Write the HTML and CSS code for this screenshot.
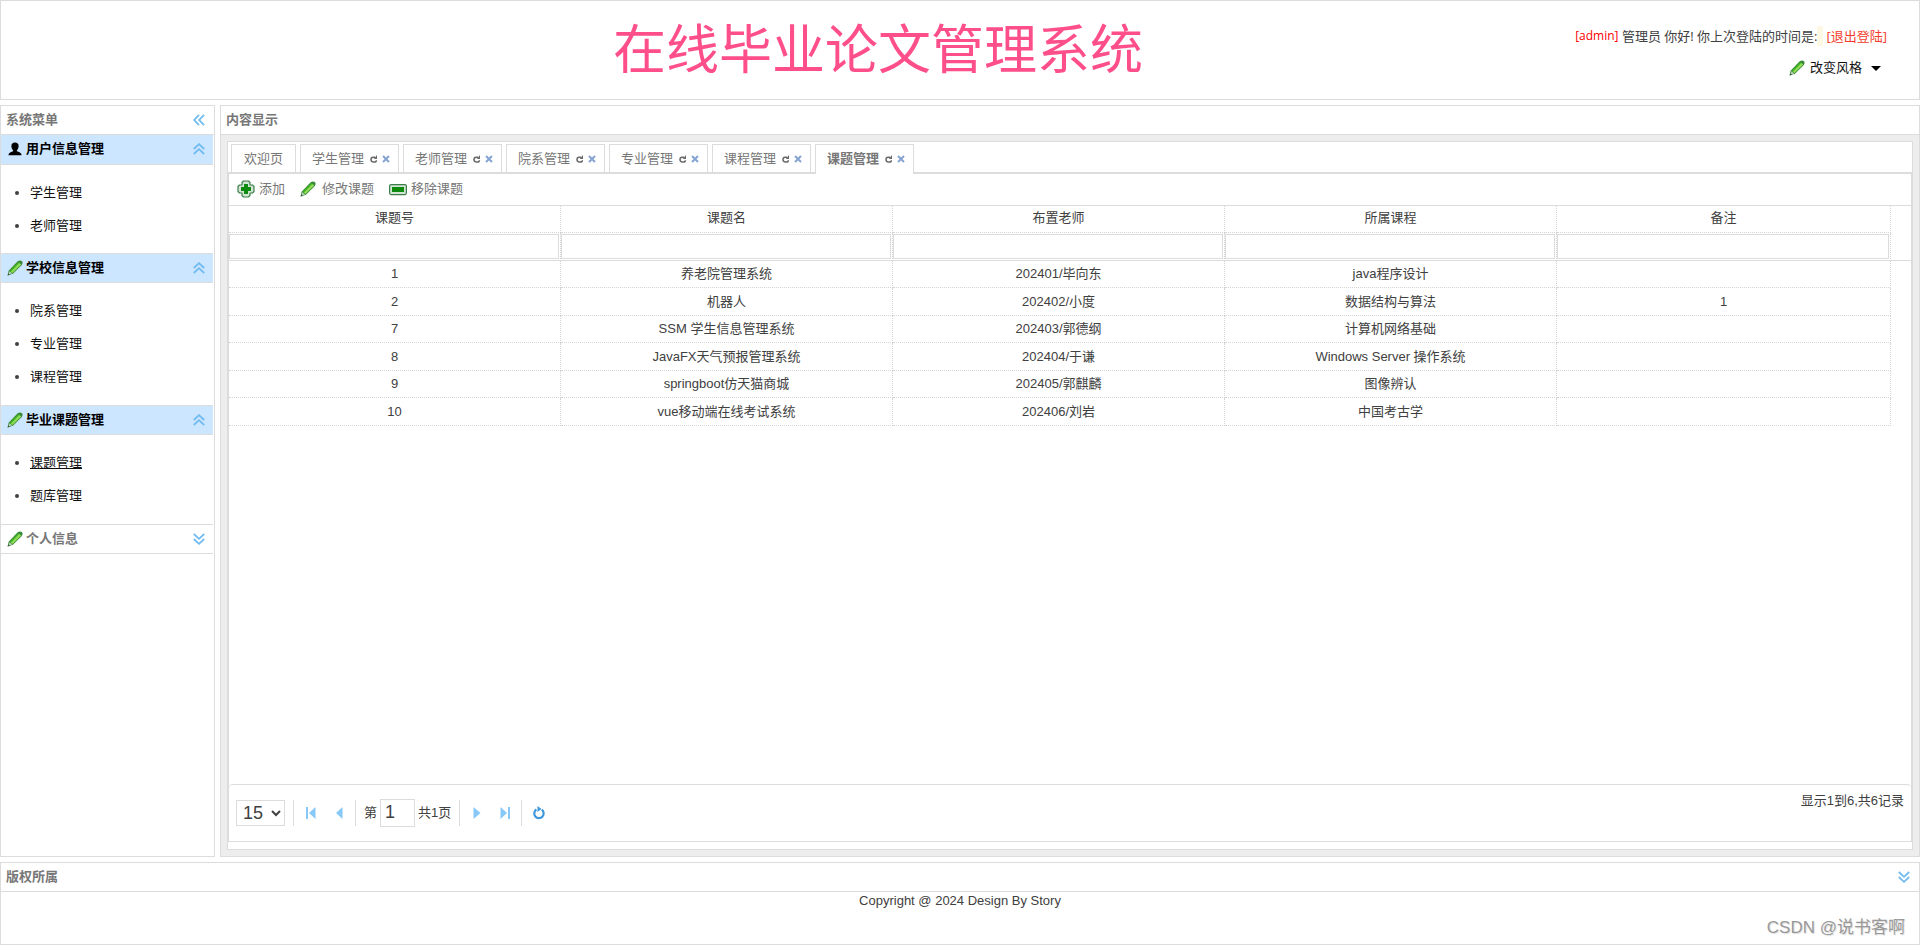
FILE: index.html
```html
<!DOCTYPE html>
<html lang="zh-CN">
<head>
<meta charset="utf-8">
<title>在线毕业论文管理系统</title>
<link rel="stylesheet" href="styles.css">
</head>
<body>
<svg class="defs" aria-hidden="true">
  <symbol id="pencil" viewBox="0 0 16 16">
    <path d="M.6 15.6 1.600 10.800 10.400 1.600Q12.600 -.2 14.800 1 16.300 2.600 14.800 5L6 13.800Z" fill="#3b8a3c"/>
    <path d="M2.600 10.600 11 2 12.800 3.200 4.200 12.200Z" fill="#3fae26"/>
    <path d="M3.800 11.700 12.200 3 14.200 4.400 5.600 13.100Z" fill="#8fdc55"/>
    <path d="M1.300 14.800 2.300 11.200 5.300 13.500Z" fill="#b9cdb9"/>
    <path d="M.6 15.600 1.200 13.200 3 14.800Z" fill="#345c38"/>
  </symbol>
  <symbol id="user" viewBox="0 0 14 14">
    <path d="M7 .6C9.200 .6 10.700 2 10.600 4.200 10.500 6.300 9.600 7.600 8.900 8.300V9.300C10.700 9.900 13.400 10.800 13.600 13.200H.4C.6 10.800 3.300 9.900 5.100 9.300V8.300C4.400 7.600 3.500 6.300 3.400 4.200 3.300 2 4.800 .6 7 .6Z" fill="#000"/>
  </symbol>
  <symbol id="up2" viewBox="0 0 12 12"><path d="M.8 6 6 1.200 11.200 6M.8 11 6 6.200 11.200 11" fill="none" stroke="#72bbf0" stroke-width="1.800"/></symbol>
  <symbol id="down2" viewBox="0 0 12 12"><path d="M.8 1 6 5.800 11.200 1M.8 6 6 10.800 11.200 6" fill="none" stroke="#72bbf0" stroke-width="1.800"/></symbol>
  <symbol id="left2" viewBox="0 0 12 12"><path d="M6 .8 1.200 6 6 11.200M11 .8 6.200 6 11 11.200" fill="none" stroke="#72bbf0" stroke-width="1.800"/></symbol>
  <symbol id="reload" viewBox="0 0 8 8"><path d="M5 2.200H3Q1 2.200 1 4.600 1 7 3.400 7H4.400Q6.400 7 6.400 5.200" fill="none" stroke="#6a6a6a" stroke-width="1.500"/><path d="M7 0V4H3.800Z" fill="#6a6a6a"/></symbol>
  <symbol id="close" viewBox="0 0 8 8"><path d="M1 1 7 7M7 1 1 7" stroke="#86a3d2" stroke-width="2"/></symbol>
</svg>

<div class="page">
  <header class="top">
    <h1 class="site-title">在线毕业论文管理系统</h1>
    <div class="account">
      <div class="greeting"><span class="name">[admin]</span> 管理员 你好! 你上次登陆的时间是:<span class="last-time"></span><a class="logout" href="#">[退出登陆]</a></div>
      <button class="theme" type="button"><svg class="ico16"><use href="#pencil"/></svg><span>改变风格</span><span class="caret"></span></button>
    </div>
  </header>

  <div class="middle">
    <aside class="side">
      <div class="panel-head"><span>系统菜单</span><button type="button" aria-label="折叠"><svg class="ico12"><use href="#left2"/></svg></button></div>
      <nav class="accordion">
        <button class="acc-head open" type="button"><svg class="ico14"><use href="#user"/></svg><span>用户信息管理</span><svg class="ico12 arrow"><use href="#up2"/></svg></button>
        <ul class="acc-list"><li><a href="#">学生管理</a></li><li><a href="#">老师管理</a></li></ul>
        <button class="acc-head open" type="button"><svg class="ico16"><use href="#pencil"/></svg><span>学校信息管理</span><svg class="ico12 arrow"><use href="#up2"/></svg></button>
        <ul class="acc-list"><li><a href="#">院系管理</a></li><li><a href="#">专业管理</a></li><li><a href="#">课程管理</a></li></ul>
        <button class="acc-head open" type="button"><svg class="ico16"><use href="#pencil"/></svg><span>毕业课题管理</span><svg class="ico12 arrow"><use href="#up2"/></svg></button>
        <ul class="acc-list"><li><a class="current" href="#">课题管理</a></li><li><a href="#">题库管理</a></li></ul>
        <button class="acc-head" type="button"><svg class="ico16"><use href="#pencil"/></svg><span>个人信息</span><svg class="ico12 arrow"><use href="#down2"/></svg></button>
      </nav>
    </aside>

    <main class="content">
      <div class="panel-head"><span>内容显示</span></div>
      <div class="content-body">
        <div class="tab-panel">
          <div class="tabs">
            <button class="tab" type="button">欢迎页</button>
            <button class="tab closable" type="button"><span>学生管理</span><svg class="ico8"><use href="#reload"/></svg><svg class="ico8"><use href="#close"/></svg></button>
            <button class="tab closable" type="button"><span>老师管理</span><svg class="ico8"><use href="#reload"/></svg><svg class="ico8"><use href="#close"/></svg></button>
            <button class="tab closable" type="button"><span>院系管理</span><svg class="ico8"><use href="#reload"/></svg><svg class="ico8"><use href="#close"/></svg></button>
            <button class="tab closable" type="button"><span>专业管理</span><svg class="ico8"><use href="#reload"/></svg><svg class="ico8"><use href="#close"/></svg></button>
            <button class="tab closable" type="button"><span>课程管理</span><svg class="ico8"><use href="#reload"/></svg><svg class="ico8"><use href="#close"/></svg></button>
            <button class="tab closable active" type="button"><span>课题管理</span><svg class="ico8"><use href="#reload"/></svg><svg class="ico8"><use href="#close"/></svg></button>
          </div>
          <section class="grid">
            <div class="toolbar">
              <button type="button"><svg class="ico18" viewBox="0 0 18 18"><path d="M6.500 1H11.500L13 2.500V5H15.500L17 6.500V11.500L15.500 13H13V15.500L11.500 17H6.500L5 15.500V13H2.500L1 11.500V6.500L2.500 5H5V2.500Z" fill="#d3e6d5" stroke="#3d7d4a" stroke-width="1.200" stroke-linejoin="round"/><path d="M7 4H11V7H14V11H11V14H7V11H4V7H7Z" fill="#0e8a0e"/></svg><span>添加</span></button>
              <button type="button"><svg class="ico16"><use href="#pencil"/></svg><span class="wide">修改课题</span></button>
              <button type="button"><svg class="ico18" viewBox="0 0 18 18"><rect x=".6" y="4.600" width="16.800" height="10" rx="1.500" fill="#d3e6d5" stroke="#3d7d4a" stroke-width="1.200"/><rect x="3" y="7" width="12" height="5" fill="#0e8a0e"/></svg><span>移除课题</span></button>
            </div>
            <div class="table-wrap">
              <table class="data">
                <thead>
                  <tr><th>课题号</th><th>课题名</th><th>布置老师</th><th>所属课程</th><th>备注</th></tr>
                  <tr class="filter"><td><input type="text" aria-label="课题号"></td><td><input type="text" aria-label="课题名"></td><td><input type="text" aria-label="布置老师"></td><td><input type="text" aria-label="所属课程"></td><td><input type="text" aria-label="备注"></td></tr>
                </thead>
                <tbody>
                  <tr><td>1</td><td>养老院管理系统</td><td>202401/毕向东</td><td>java程序设计</td><td></td></tr>
                  <tr><td>2</td><td>机器人</td><td>202402/小度</td><td>数据结构与算法</td><td>1</td></tr>
                  <tr><td>7</td><td>SSM 学生信息管理系统</td><td>202403/郭德纲</td><td>计算机网络基础</td><td></td></tr>
                  <tr><td>8</td><td>JavaFX天气预报管理系统</td><td>202404/于谦</td><td>Windows Server 操作系统</td><td></td></tr>
                  <tr><td>9</td><td>springboot仿天猫商城</td><td>202405/郭麒麟</td><td>图像辨认</td><td></td></tr>
                  <tr><td>10</td><td>vue移动端在线考试系统</td><td>202406/刘岩</td><td>中国考古学</td><td></td></tr>
                </tbody>
              </table>
            </div>
            <div class="pager">
              <div class="pager-controls">
                <select aria-label="每页条数"><option>15</option></select>
                <span class="sep wide"></span>
                <button type="button" aria-label="首页"><svg class="ico12" viewBox="0 0 12 12"><path d="M1 0H3V12H1ZM10.500 0V12L4 6Z" fill="#88c8f7"/></svg></button>
                <button type="button" aria-label="上一页"><svg class="ico12" viewBox="0 0 12 12"><path d="M9.500 0V12L3 6Z" fill="#88c8f7"/></svg></button>
                <span class="sep"></span>
                <label class="page-no">第<input type="text" value="1"><span>共1页</span></label>
                <span class="sep wide"></span>
                <button type="button" aria-label="下一页"><svg class="ico12" viewBox="0 0 12 12"><path d="M2.500 0V12L9.500 6Z" fill="#88c8f7"/></svg></button>
                <button type="button" aria-label="末页"><svg class="ico12" viewBox="0 0 12 12"><path d="M1.500 0V12L8 6ZM9 0H11V12H9Z" fill="#88c8f7"/></svg></button>
                <span class="sep"></span>
                <button type="button" aria-label="刷新"><svg class="ico14" viewBox="0 0 14 14"><path d="M9.800 3.700A4.700 4.700 0 1 1 4.400 3.500" fill="none" stroke="#3f97dc" stroke-width="2.200"/><path d="M5.500 0 9.500 3 5.500 6Z" fill="#3f97dc"/></svg></button>
              </div>
              <div class="summary">显示1到6,共6记录</div>
            </div>
          </section>
        </div>
      </div>
    </main>
  </div>

  <footer class="bottom">
    <div class="panel-head"><span>版权所属</span><button type="button" aria-label="折叠"><svg class="ico12"><use href="#down2"/></svg></button></div>
    <div class="copyright">Copyright @ 2024 Design By Story</div>
    <div class="watermark">CSDN @说书客啊</div>
  </footer>
</div>
</body>
</html>
```

FILE: styles.css
```css
* { box-sizing: border-box; }
body {
  margin: 0;
  font-family: "Liberation Sans", "Noto Sans CJK SC", sans-serif;
  font-size: 13px;
  line-height: 18px;
  color: #404040;
  background: #fff;
}
button, input, select { font: inherit; color: inherit; }
button { padding: 0; border: 0; background: none; display: flex; align-items: center; cursor: pointer; }
a { color: #111; text-decoration: none; }
svg { display: block; flex: none; }
.defs { position: absolute; width: 0; height: 0; }
.ico8 { width: 8px; height: 8px; }
.ico12 { width: 12px; height: 12px; }
.ico14 { width: 14px; height: 14px; }
.ico16 { width: 16px; height: 16px; }
.ico18 { width: 18px; height: 18px; }

.page { display: flex; flex-direction: column; gap: 5px; min-height: 100vh; }

/* top banner */
.top { position: relative; height: 100px; border: 1px solid #dcdcdc; display: flex; justify-content: center; padding-right: 164px; }
.site-title {
  margin: 0;
  padding-top: 14px;
  font-size: 53px;
  line-height: 72px;
  font-weight: 400;
  color: #ff4f8b;
}
.account { position: absolute; top: 25px; right: 32px; display: flex; flex-direction: column; align-items: flex-end; gap: 13px; }
.greeting { display: flex; align-items: center; white-space: pre; font-family: "Open Sans", "Noto Sans CJK SC", sans-serif; line-height: 20px; }
.name { color: #f00; font-size: 12px; }
.last-time { width: 6px; height: 20px; margin-right: 3px; background: #fcf8e3; }
.logout { color: #f43b2b; }
.theme { gap: 5px; padding-right: 6px; color: #111; }
.caret { margin-left: 4px; border: 5px solid transparent; border-top-color: #000; border-bottom: 0; }

/* panels */
.middle { flex: 1; display: flex; gap: 5px; }
.panel-head {
  display: flex;
  align-items: center;
  justify-content: space-between;
  height: 29px;
  padding: 0 9px 1px 5px;
  border-bottom: 1px solid #dcdcdc;
  color: #777;
  font-weight: 700;
}
.side { width: 215px; border: 1px solid #dcdcdc; }
.accordion { margin-right: 1px; }
.acc-head {
  width: 100%;
  height: 30px;
  padding: 0 8px 1px 6px;
  gap: 3px;
  border: solid #dcdcdc;
  border-width: 1px 0;
  color: #777;
  font-weight: 700;
}
.acc-head:first-child { border-top: 0; }
.acc-head .ico14 { margin: 0 1px; }
.acc-head.open { background: #cce6ff; color: #000; }
.arrow { margin-left: auto; }
.acc-list { margin: 0; padding: 11px 0 12px 29px; line-height: 33px; }
.acc-list:first-of-type { padding-bottom: 11px; }
.acc-list li::marker { font-size: 13px; }
.acc-list .current { text-decoration: underline; }

.content { flex: 1; display: flex; flex-direction: column; border: 1px solid #dcdcdc; }
.content-body { flex: 1; display: flex; padding: 6px; background: #ededed; }
.tab-panel { flex: 1; display: flex; flex-direction: column; padding-bottom: 7px; border: 1px solid #dcdcdc; background: #fff; }
.tabs { display: flex; gap: 4px; height: 31px; padding: 2px 3px 0; border-bottom: 1px solid #dcdcdc; }
.tab { height: 28px; padding: 0 12px; border: 1px solid #dcdcdc; border-bottom: 0; color: #777; }
.tab.closable { gap: 4px; padding: 0 8px 0 11px; }
.tab.closable span { margin-right: 2px; }
.tab.active { height: 30px; padding-bottom: 2px; background: #fff; font-weight: 700; z-index: 1; }

/* data grid */
.grid { flex: 1; display: flex; flex-direction: column; border: 1px solid #dcdcdc; }
.toolbar { display: flex; gap: 15px; height: 32px; padding: 0 8px 2px; border-bottom: 1px solid #dcdcdc; color: #777; }
.toolbar button { gap: 4px; }
.toolbar .wide { margin-left: 2px; }
.table-wrap { flex: 1; background: linear-gradient(#dcdcdc, #dcdcdc) 0 54px / 100% 1px no-repeat; padding-right: 20px; }
.data { width: 100%; table-layout: fixed; border-collapse: separate; border-spacing: 0; text-align: center; }
.data th, .data td { height: 27px; padding: 0; border: dotted #d4d4d4; border-width: 0 1px 1px 0; font-weight: 400; }
.data th { padding-bottom: 2px; }
.data th:last-child { width: 334px; }
.data tbody tr:nth-child(even) td { height: 28px; }
.data .filter td { height: 28px; padding: 1px 1px 0 0; border-bottom: 1px solid #dcdcdc; }
.data .filter input { display: block; width: 100%; height: 25px; margin-bottom: 1px; border: 1px solid #dcdcdc; background: #fff; }

/* pager */
.pager { display: flex; justify-content: space-between; height: 57px; border-top: 1px solid #dcdcdc; border-radius: 4px 4px 0 0; padding: 7px; }
.pager-controls { display: flex; align-items: center; align-self: center; height: 28px; }
.pager-controls select { width: 49px; height: 26px; border: 1px solid #dcdcdc; border-radius: 0; background: #fff; font-size: 18px; padding: 0 2px; }
.pager-controls button { width: 28px; height: 26px; justify-content: center; }
.sep { width: 1px; height: 26px; margin: 0 3px 0 2px; background: #dcdcdc; }
.sep.wide { margin-left: 8px; }
.page-no { display: flex; align-items: center; gap: 3px; padding-left: 5px; }
.page-no input { width: 35px; height: 28px; padding: 0 4px 2px; border: 1px solid #dcdcdc; font-size: 18px; }

/* footer */
.bottom { position: relative; height: 83px; border: 1px solid #dcdcdc; }
.copyright { text-align: center; }
.watermark { position: absolute; right: 14px; bottom: 5px; font-size: 17px; line-height: 22px; color: #999; text-shadow: 1px 1px 1px #ddd; }
```
